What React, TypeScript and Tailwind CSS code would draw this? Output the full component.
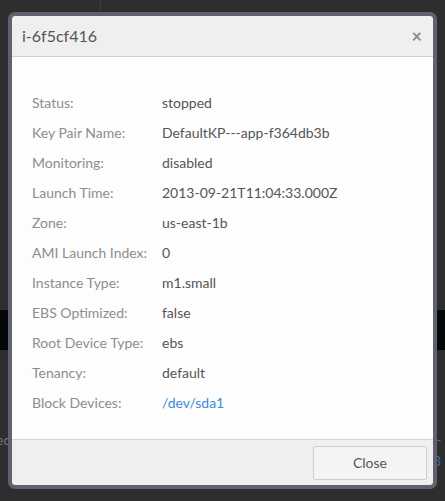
import React from "react";

const rows: [string, string, boolean?][] = [
  ["Status:", "stopped"],
  ["Key Pair Name:", "DefaultKP---app-f364db3b"],
  ["Monitoring:", "disabled"],
  ["Launch Time:", "2013-09-21T11:04:33.000Z"],
  ["Zone:", "us-east-1b"],
  ["AMI Launch Index:", "0"],
  ["Instance Type:", "m1.small"],
  ["EBS Optimized:", "false"],
  ["Root Device Type:", "ebs"],
  ["Tenancy:", "default"],
  ["Block Devices:", "/dev/sda1", true],
];

export default function App() {
  return (
    <div
      className="relative w-[445px] h-[501px] overflow-hidden bg-[#2e2e2e] pt-[12px] px-[8px]"
      style={{ fontFamily: "Lato, 'Open Sans', sans-serif" }}
    >
      <div className="absolute left-[100px] top-0 h-[14px] w-px bg-[#3c3c3c]" />
      <div className="absolute left-0 top-[310px] h-[40px] w-full bg-[#05080b]" />
      <div className="absolute left-[-4px] top-[429px] text-[14px] text-[#777]">ed</div>
      <div className="absolute left-[433px] top-[429px] text-[14px] text-[#3a6ea5]">i-3</div>

      <div className="relative w-[429px] h-[477px] rounded-[7px] border-[4px] border-[#60606f] flex flex-col overflow-hidden">
        <div className="h-[41px] bg-[#efefef] border-b border-[#cfcfcf] flex items-center justify-between pl-[10px] pr-[11px]">
          <span className="text-[16px] text-[#555] leading-none">i-6f5cf416</span>
          <span className="text-[18px] font-bold text-[#8a8a8a] leading-none">×</span>
        </div>
        <div className="flex-1 bg-[#fdfdfd] pt-[30px] pl-[20px]">
          {rows.map(([k, v, link]) => (
            <div key={k} className="flex h-[30px] items-center text-[14px]">
              <span className="w-[130px] text-[#8d8d8d]">{k}</span>
              <span className={link ? "text-[#3c8ad8]" : "text-[#555]"}>{v}</span>
            </div>
          ))}
        </div>
        <div className="h-[46px] bg-[#efefef] border-t border-[#d6d6d6] flex items-center justify-end pr-[6px]">
          <button className="w-[114px] h-[34px] rounded-[2px] border border-[#cdcdcd] bg-[#f4f4f4] text-[14px] text-[#555]">
            Close
          </button>
        </div>
      </div>
    </div>
  );
}
